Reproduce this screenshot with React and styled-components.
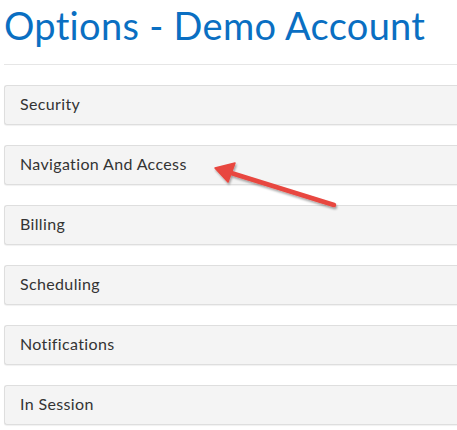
import React from 'react';
import styled, { createGlobalStyle } from 'styled-components';

const GlobalStyles = createGlobalStyle`
  html, body {
    margin: 0;
    padding: 0;
    background: #ffffff;
    font-family: Lato, "Open Sans", Arial, sans-serif;
    overflow: hidden;
  }
`;

const Page = styled.div`
  position: relative;
  width: 457px;
  height: 430px;
  padding-left: 4px;
  box-sizing: border-box;
  overflow: hidden;
`;

const Title = styled.h1`
  margin: 0;
  padding-top: 2px;
  font-family: Lato, sans-serif;
  font-weight: 400;
  font-size: 38px;
  line-height: 46px;
  color: #0a6fc2;
  letter-spacing: 0.3px;
`;

const Rule = styled.hr`
  margin: 16px 0 20px;
  border: 0;
  border-top: 1px solid #e6e6e6;
`;

const PanelList = styled.div`
  display: flex;
  flex-direction: column;
  gap: 20px;
`;

const Panel = styled.div`
  height: 40px;
  box-sizing: border-box;
  background: #f4f4f4;
  border: 1px solid #dedede;
  border-right: 0;
  border-radius: 3px 0 0 3px;
  box-shadow: 0 1px 1px rgba(0, 0, 0, 0.06);
  display: flex;
  align-items: center;
  padding-left: 15px;
  padding-bottom: 3px;
  font-family: Lato, sans-serif;
  font-size: 16px;
  color: #333333;
  letter-spacing: 0.35px;
`;

const Arrow = styled.svg`
  position: absolute;
  left: 0;
  top: 0;
  pointer-events: none;
`;

const items = ['Security', 'Navigation And Access', 'Billing', 'Scheduling', 'Notifications', 'In Session'];

export default function App() {
  return (
    <Page>
      <GlobalStyles />
      <Title>Options - Demo Account</Title>
      <Rule />
      <PanelList>
        {items.map((label) => (
          <Panel key={label}>{label}</Panel>
        ))}
      </PanelList>
      <Arrow width="457" height="430">
        <defs>
          <filter id="sh" x="-20%" y="-50%" width="140%" height="200%">
            <feDropShadow dx="1" dy="2" stdDeviation="1.2" floodColor="#000" floodOpacity="0.35" />
          </filter>
        </defs>
        <g filter="url(#sh)" fill="#e8473f" stroke="#e8473f">
          <line x1="334" y1="205" x2="228" y2="172" strokeWidth="4.5" strokeLinecap="round" />
          <polygon points="215,168 235,163 228,182" strokeWidth="1.5" strokeLinejoin="round" />
        </g>
      </Arrow>
    </Page>
  );
}
